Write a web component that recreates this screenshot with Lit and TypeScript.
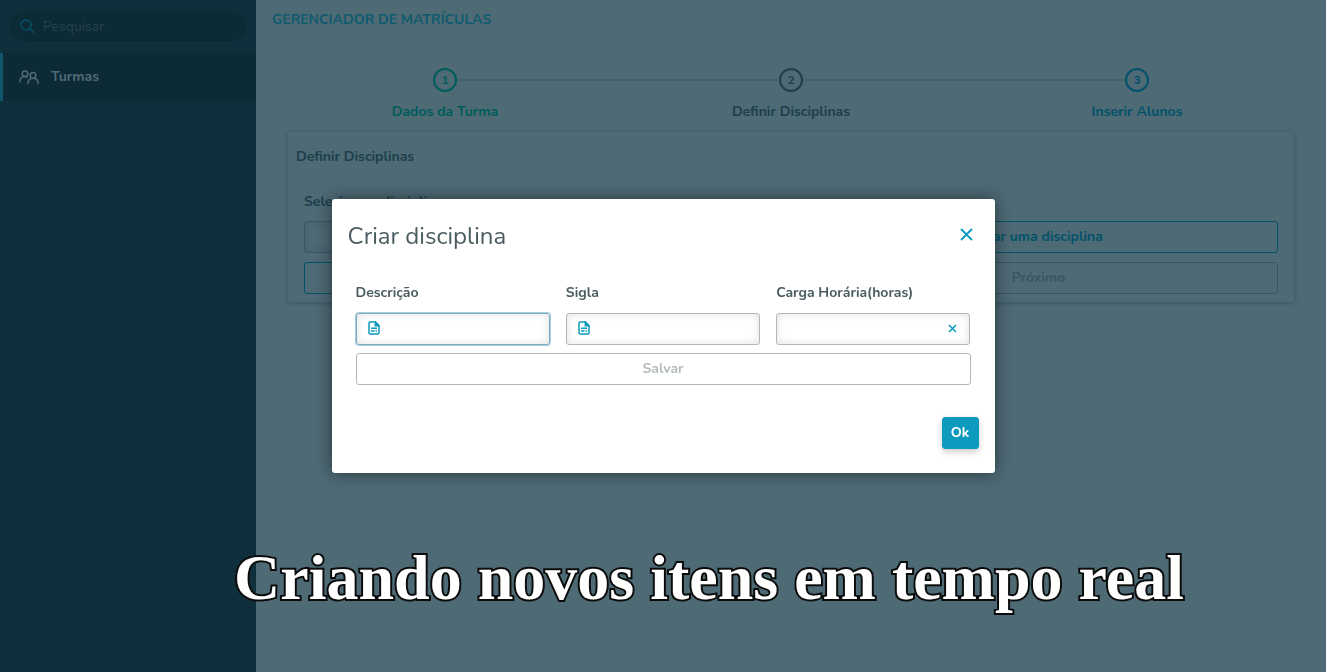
import { LitElement, html, css, svg } from "lit";
import { customElement, property } from "lit/decorators.js";

const searchIcon = svg`<circle cx="6" cy="6" r="5"/><path d="M9.800 9.800l4 4"/>`;
const peopleIcon = svg`<circle cx="6" cy="3.800" r="2.800"/><path d="M.8 12.500c0-3.600 1.600-5.900 4.400-5.900 1.300 0 2.300.4 3 1.100"/><circle cx="14" cy="5.400" r="2.800"/><path d="M8.800 14c0-3.600 2.200-5.800 5.200-5.800s5.200 2.200 5.200 5.800"/>`;
const closeIcon = svg`<path d="M1 1l11 11M12 1L1 12"/>`;
const clearIcon = svg`<path d="M1 1l7 7M8 1L1 8"/>`;
const docIcon = svg`<path d="M1 2.200Q1 1 2.200 1H7.500L11 4.500V11.800Q11 13 9.800 13H2.200Q1 13 1 11.800Z"/><path d="M7.300 1V4.700H11Z" fill="currentColor"/><path d="M3 7.200H9M3 9.900H6.500M7.500 9.900H9"/>`;

const shared = css`
  * { box-sizing: border-box; }
  button, input { font: inherit; color: inherit; margin: 0; }
  svg { display: block; fill: none; stroke: currentColor; }
  .button {
    display: block;
    width: 100%;
    height: 32px;
    padding: 0 8px;
    border: 1px solid currentColor;
    border-radius: 3px;
    background: transparent;
    font-weight: 700;
    text-align: center;
  }
`;

@customElement("side-menu")
class SideMenu extends LitElement {
  static styles = [shared, css`
    :host { display: block; background: #102f3c; padding-top: 10px; }
    .search {
      display: flex;
      align-items: center;
      gap: 8px;
      height: 33px;
      margin: 0 9px 10px;
      padding: 0 10px;
      border: 1px solid #12323e;
      border-radius: 17px;
      background: #0d2a37;
      color: #055068;
    }
    .search input {
      flex: 1;
      min-width: 0;
      padding: 0;
      border: 0;
      outline: 0;
      background: transparent;
      color: #4f6b77;
    }
    .search input::placeholder { color: #24434f; opacity: 1; }
    .item {
      display: flex;
      align-items: center;
      gap: 12px;
      height: 48px;
      padding-left: 16px;
      border-left: 3px solid #10586b;
      background: #0d2a37;
      color: #4f6b77;
      font-weight: 700;
      text-decoration: none;
    }
  `];

  render() {
    return html`
      <label class="search">
        <svg width="15" height="15" viewBox="0 0 15 15" stroke-width="1.6">${searchIcon}</svg>
        <input type="text" placeholder="Pesquisar" aria-label="Pesquisar">
      </label>
      <nav>
        <a class="item" href="#turmas">
          <svg width="20" height="15" viewBox="0 0 20 15" stroke-width="1.5">${peopleIcon}</svg>
          <span>Turmas</span>
        </a>
      </nav>`;
  }
}

@customElement("step-bar")
class StepBar extends LitElement {
  @property({ attribute: false }) steps: { label: string; state: string }[] = [];

  static styles = [shared, css`
    :host { display: block; }
    .steps {
      display: grid;
      grid-template-columns: repeat(3, 1fr);
      margin: 0;
      padding: 0;
      list-style: none;
      font-weight: 700;
      text-align: center;
    }
    .marker { display: grid; grid-template-columns: 1fr 24px 1fr; align-items: center; }
    .line { height: 2px; background: #456069; }
    .line.empty { background: transparent; }
    .circle {
      height: 24px;
      border: 2px solid currentColor;
      border-radius: 50%;
      font-size: 12px;
      line-height: 20px;
    }
    .label { margin-top: 10px; line-height: 20px; }
    .done { color: #005c5c; }
    .current { color: #1d3f4c; }
    .next { color: #03526b; }
  `];

  render() {
    const last = this.steps.length - 1;
    return html`<ol class="steps">${this.steps.map((s, i) => html`
      <li class=${s.state}>
        <div class="marker">
          <span class="line ${i === 0 ? "empty" : ""}"></span>
          <span class="circle">${i + 1}</span>
          <span class="line ${i === last ? "empty" : ""}"></span>
        </div>
        <div class="label">${s.label}</div>
      </li>`)}</ol>`;
  }
}

@customElement("subject-dialog")
class SubjectDialog extends LitElement {
  static styles = [shared, css`
    :host {
      position: fixed;
      inset: 0;
      display: flex;
      align-items: center;
      justify-content: center;
    }
    .dialog {
      width: 50%;
      padding: 16px 16px 24px;
      border-radius: 3px;
      background: #fff;
      color: #4a5c60;
      box-shadow: 0 0 16px rgba(0, 0, 0, 0.5);
    }
    .header { display: flex; justify-content: space-between; align-items: flex-start; height: 40px; }
    .title { margin: 0; font-size: 24px; line-height: 42px; font-weight: 400; }
    .close { padding: 13px 6px; border: 0; background: none; color: #0c9abe; }
    .body { padding: 28px 8px 32px; }
    .fields { display: grid; grid-template-columns: repeat(3, minmax(0, 1fr)); gap: 16px; margin-bottom: 8px; }
    .label { display: block; margin-bottom: 10px; line-height: 20px; font-weight: 700; }
    .box {
      display: flex;
      align-items: center;
      gap: 8px;
      height: 32px;
      padding: 0 11px 2px;
      border: 1px solid #b1b7b9;
      border-radius: 3px;
      box-shadow: inset 0 0 8px rgba(0, 0, 0, 0.12);
      color: #0c9abe;
    }
    .box input { flex: 1; min-width: 0; padding: 0; border: 0; outline: 0; background: none; }
    .box.focused {
      border-color: #7fabc0;
      box-shadow: 0 0 0 1px #a9cde0, inset 0 0 8px rgba(0, 0, 0, 0.12);
    }
    .clear { padding: 0; border: 0; background: none; color: #0c9abe; }
    .save { color: #b6bdbf; }
    .save:disabled { border-color: #b1b7b9; }
    .footer { display: flex; justify-content: flex-end; }
    .ok {
      width: 37px;
      border-color: #0c9abe;
      background: #0c9abe;
      color: #fff;
      padding: 0;
      box-shadow: 0 3px 6px rgba(0, 0, 0, 0.2);
    }
  `];

  private doc() {
    return html`<svg width="12" height="14" viewBox="0 0 12 14" stroke-width="1.500">${docIcon}</svg>`;
  }

  render() {
    return html`
      <section class="dialog" role="dialog" aria-labelledby="title">
        <header class="header">
          <h2 class="title" id="title">Criar disciplina</h2>
          <button class="close" aria-label="Fechar">
            <svg width="13" height="13" viewBox="0 0 13 13" stroke-width="1.800">${closeIcon}</svg>
          </button>
        </header>
        <form class="body">
          <div class="fields">
            <div>
              <label class="label" for="description">Descrição</label>
              <div class="box focused">${this.doc()}<input id="description" type="text"></div>
            </div>
            <div>
              <label class="label" for="code">Sigla</label>
              <div class="box">${this.doc()}<input id="code" type="text"></div>
            </div>
            <div>
              <label class="label" for="hours">Carga Horária(horas)</label>
              <div class="box">
                <input id="hours" type="text" inputmode="numeric">
                <button class="clear" type="button" aria-label="Limpar">
                  <svg width="11" height="9" viewBox="-1 0 11 9" stroke-width="1.500">${clearIcon}</svg>
                </button>
              </div>
            </div>
          </div>
          <button class="button save" type="button" disabled>Salvar</button>
        </form>
        <footer class="footer"><button class="button ok">Ok</button></footer>
      </section>`;
  }
}

@customElement("app-root")
class AppRoot extends LitElement {
  private steps = [
    { label: "Dados da Turma", state: "done" },
    { label: "Definir Disciplinas", state: "current" },
    { label: "Inserir Alunos", state: "next" },
  ];

  static styles = [shared, css`
    :host {
      display: grid;
      grid-template-columns: 256px 1fr;
      min-height: 100vh;
      background: #4e6a75;
      color: #1d3f4c;
      font: 14px/20px Nunito, Lato, sans-serif;
    }
    .main { padding: 10px 16px; }
    .heading { margin: 0 0 38px; font-size: 14px; line-height: 20px; font-weight: 700; color: #0e5a6e; }
    .card {
      margin: 10px 16px 0;
      padding: 15px 8px 8px;
      border-radius: 3px;
      box-shadow: 0 1px 4px rgba(10, 40, 55, 0.35);
    }
    .subtitle { margin: 0 0 25px; font-size: 14px; line-height: 20px; font-weight: 700; }
    .form { padding: 0 8px; }
    .label { display: block; margin-bottom: 9px; line-height: 20px; font-weight: 700; }
    .grid { display: grid; grid-template-columns: 1fr 1fr; gap: 9px 16px; }
    .field {
      width: 100%;
      height: 32px;
      padding: 0 12px;
      border: 1px solid #3a5662;
      border-radius: 3px;
      background: transparent;
      box-shadow: inset 0 0 8px rgba(10, 40, 55, 0.15);
    }
    .action { color: #03526b; }
    .muted { color: #3a5662; }
    .caption {
      position: fixed;
      inset: auto 0 54px;
      margin: 0;
      padding-left: 92px;
      color: #fff;
      font: 700 64px/80px "Liberation Serif", serif;
      text-align: center;
      white-space: nowrap;
      -webkit-text-stroke: 4px #0b0b0b;
      paint-order: stroke fill;
      pointer-events: none;
    }
  `];

  render() {
    return html`
      <side-menu></side-menu>
      <main class="main">
        <h1 class="heading">GERENCIADOR DE MATRÍCULAS</h1>
        <step-bar .steps=${this.steps}></step-bar>
        <section class="card">
          <h2 class="subtitle">Definir Disciplinas</h2>
          <div class="form">
            <label class="label" for="subject">Selecione a disciplina</label>
            <div class="grid">
              <input class="field" id="subject" type="text">
              <button class="button action">Criar uma disciplina</button>
              <button class="button action">Anterior</button>
              <button class="button muted" disabled>Próximo</button>
            </div>
          </div>
        </section>
      </main>
      <subject-dialog></subject-dialog>
      <p class="caption">Criando novos itens em tempo real</p>`;
  }
}
